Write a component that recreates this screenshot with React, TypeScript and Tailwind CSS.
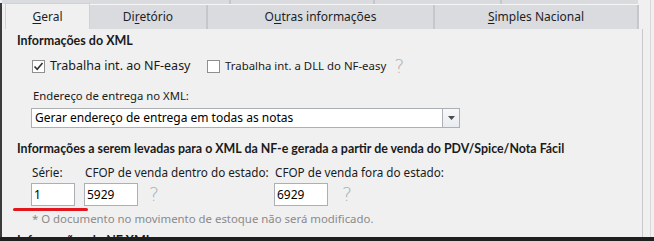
import React from 'react';

const font = { fontFamily: '"Noto Sans", "Open Sans", sans-serif' };
const heading = { fontFamily: 'Lato, "Noto Sans", sans-serif' };

const Tab = ({
  label,
  mnemonic,
  width,
  active = false,
}: {
  label: string;
  mnemonic: number;
  width: string;
  active?: boolean;
}) => {
  const before = label.slice(0, mnemonic);
  const letter = label.charAt(mnemonic);
  const after = label.slice(mnemonic + 1);
  return (
    <div
      className={
        active
          ? `relative z-10 -mt-[2px] flex h-[26px] items-center justify-center border border-b-0 border-[#d2d2d2] bg-[#f0f0f0] text-[12px] text-[#1e1e28] ${width}`
          : `flex h-[24px] items-center justify-center border-r-2 border-[#c6c7ca] bg-[#dadbde] text-[12px] text-[#1e1e28] ${width}`
      }
    >
      <span>
        {before}
        <span className="underline underline-offset-2">{letter}</span>
        {after}
      </span>
    </div>
  );
};

const Checkbox = ({ checked, label, size }: { checked: boolean; label: string; size: string }) => (
  <label className="flex items-center gap-[5px]">
    <span className="flex h-[13px] w-[13px] items-center justify-center border border-[#8e8f8f] bg-white">
      {checked && (
        <svg width="11" height="11" viewBox="0 0 11 11">
          <path d="M1.5 5.5 L4.2 8.3 L9.5 2" fill="none" stroke="#333" strokeWidth="1.6" />
        </svg>
      )}
    </span>
    <span className={`text-[#1a1a1a] ${size}`}>{label}</span>
  </label>
);

const Help = ({ className = '' }: { className?: string }) => (
  <span
    className={`text-[19px] leading-none text-[#a9b1b4] ${className}`}
    style={{ fontFamily: '"DejaVu Sans", sans-serif', fontWeight: 300 }}
  >
    ?
  </span>
);

const TextBox = ({ value, width }: { value: string; width: string }) => (
  <div className={`flex h-[23px] items-center border border-[#aab0b6] bg-white pl-[2px] text-[12px] text-black ${width}`}>
    {value}
  </div>
);

export default function App() {
  return (
    <div className="relative flex h-[241px] w-[654px] flex-col overflow-hidden bg-[#f0f0f0]" style={font}>
      <div className="flex h-[237px]">
        <div className="mt-[3px] w-[2px] bg-[#3b3b3b]" />
        <div className="flex w-[641px] flex-col">
          {/* upper tab row, partially visible */}
          <div className="flex h-[4px]">
            <div className="h-full w-[227px] bg-[#dadbde]" />
            <div className="h-full w-[2px] bg-[#c6c7ca]" />
            <div className="h-full w-[142px] bg-[#dadbde]" />
            <div className="h-full w-[2px] bg-[#c6c7ca]" />
            <div className="h-full w-[125px] bg-[#dadbde]" />
            <div className="h-full w-[2px] bg-[#c6c7ca]" />
            <div className="h-full w-[136px] bg-[#dadbde]" />
          </div>
          <div className="h-[1px] w-[636px] bg-[#f7f7f7]" />
          {/* tab row */}
          <div className="flex h-[24px] pl-[3px]">
            <Tab label="Geral" mnemonic={0} width="w-[85px]" active />
            <Tab label="Diretório" mnemonic={2} width="w-[118px]" />
            <Tab label="Outras informações" mnemonic={1} width="w-[227px]" />
            <Tab label="Simples Nacional" mnemonic={0} width="w-[204px]" />
          </div>
          {/* panel */}
          <div className="flex flex-1 flex-col overflow-hidden border-r border-[#c9c9c9] bg-[#f0f0f0] pl-[15px] pt-[4px]">
            <div className="h-[16px] text-[12.5px] font-bold leading-[16px] text-[#1a1a1a]" style={heading}>
              Informações do XML
            </div>
            <div className="mt-[9px] flex h-[16px] items-center pl-[15px]">
              <div className="w-[175px]">
                <Checkbox checked label="Trabalha int. ao NF-easy" size="text-[12.5px]" />
              </div>
              <Checkbox checked={false} label="Trabalha int. a DLL do NF-easy" size="text-[11.4px]" />
              <Help className="ml-[8px]" />
            </div>
            <div className="mt-[14px] h-[16px] pl-[16px] text-[11.3px] leading-[16px] text-[#1a1a1a]">
              Endereço de entrega no XML:
            </div>
            <div className="ml-[14px] mt-[4px] flex h-[23px] w-[429px] border border-[#aab0b6] bg-white">
              <div className="flex flex-1 items-center pl-[3px] text-[12px] text-black">
                Gerar endereço de entrega em todas as notas
              </div>
              <div className="flex w-[17px] items-center justify-center border-l border-[#aab0b6] bg-gradient-to-b from-[#f7f8fa] to-[#e9ecf1]">
                <svg width="7" height="4" viewBox="0 0 7 4">
                  <path d="M0 0 H7 L3.5 4 Z" fill="#4a4a4a" />
                </svg>
              </div>
            </div>
            <div
              className="mt-[13px] h-[16px] whitespace-nowrap text-[12.4px] font-bold leading-[16px] text-[#1a1a1a]"
              style={heading}
            >
              Informações a serem levadas para o XML da NF-e gerada a partir de venda do PDV/Spice/Nota Fácil
            </div>
            <div className="mt-[7px] flex pl-[14px] text-[11.7px]">
              <div className="flex w-[53px] flex-col gap-[3px]">
                <div className="h-[16px] pl-[1px] leading-[16px] text-[#1a1a1a]">Série:</div>
                <TextBox value="1" width="w-[44px]" />
              </div>
              <div className="flex w-[190px] flex-col gap-[3px]">
                <div className="h-[16px] whitespace-nowrap pl-[1px] leading-[16px] text-[#1a1a1a]">
                  CFOP de venda dentro do estado:
                </div>
                <div className="flex items-center">
                  <TextBox value="5929" width="w-[54px]" />
                  <Help className="ml-[11px]" />
                </div>
              </div>
              <div className="flex flex-col gap-[3px]">
                <div className="h-[16px] whitespace-nowrap pl-[1px] leading-[16px] text-[#1a1a1a]">
                  CFOP de venda fora do estado:
                </div>
                <div className="flex items-center">
                  <TextBox value="6929" width="w-[54px]" />
                  <Help className="ml-[14px]" />
                </div>
              </div>
            </div>
            <div className="mt-[5px] h-[16px] pl-[15px] text-[11.4px] leading-[16px] text-[#8a8a8a]">
              * O documento no movimento de estoque não será modificado.
            </div>
            <div className="mt-[6px] h-[16px] text-[12.5px] font-bold leading-[16px] text-[#1a1a1a]" style={heading}>
              Informações do NF XML
            </div>
          </div>
        </div>
        <div className="flex w-[11px] justify-center pl-[3px]">
          <div className="w-[1px] bg-[#d8d8d8]" />
        </div>
      </div>
      <div className="h-[4px] bg-[#1e1e1e]" />
      {/* red annotation underline */}
      <div className="absolute left-[13px] top-[208px] h-[3px] w-[75px] rounded-full bg-[#e2161c]" />
    </div>
  );
}
